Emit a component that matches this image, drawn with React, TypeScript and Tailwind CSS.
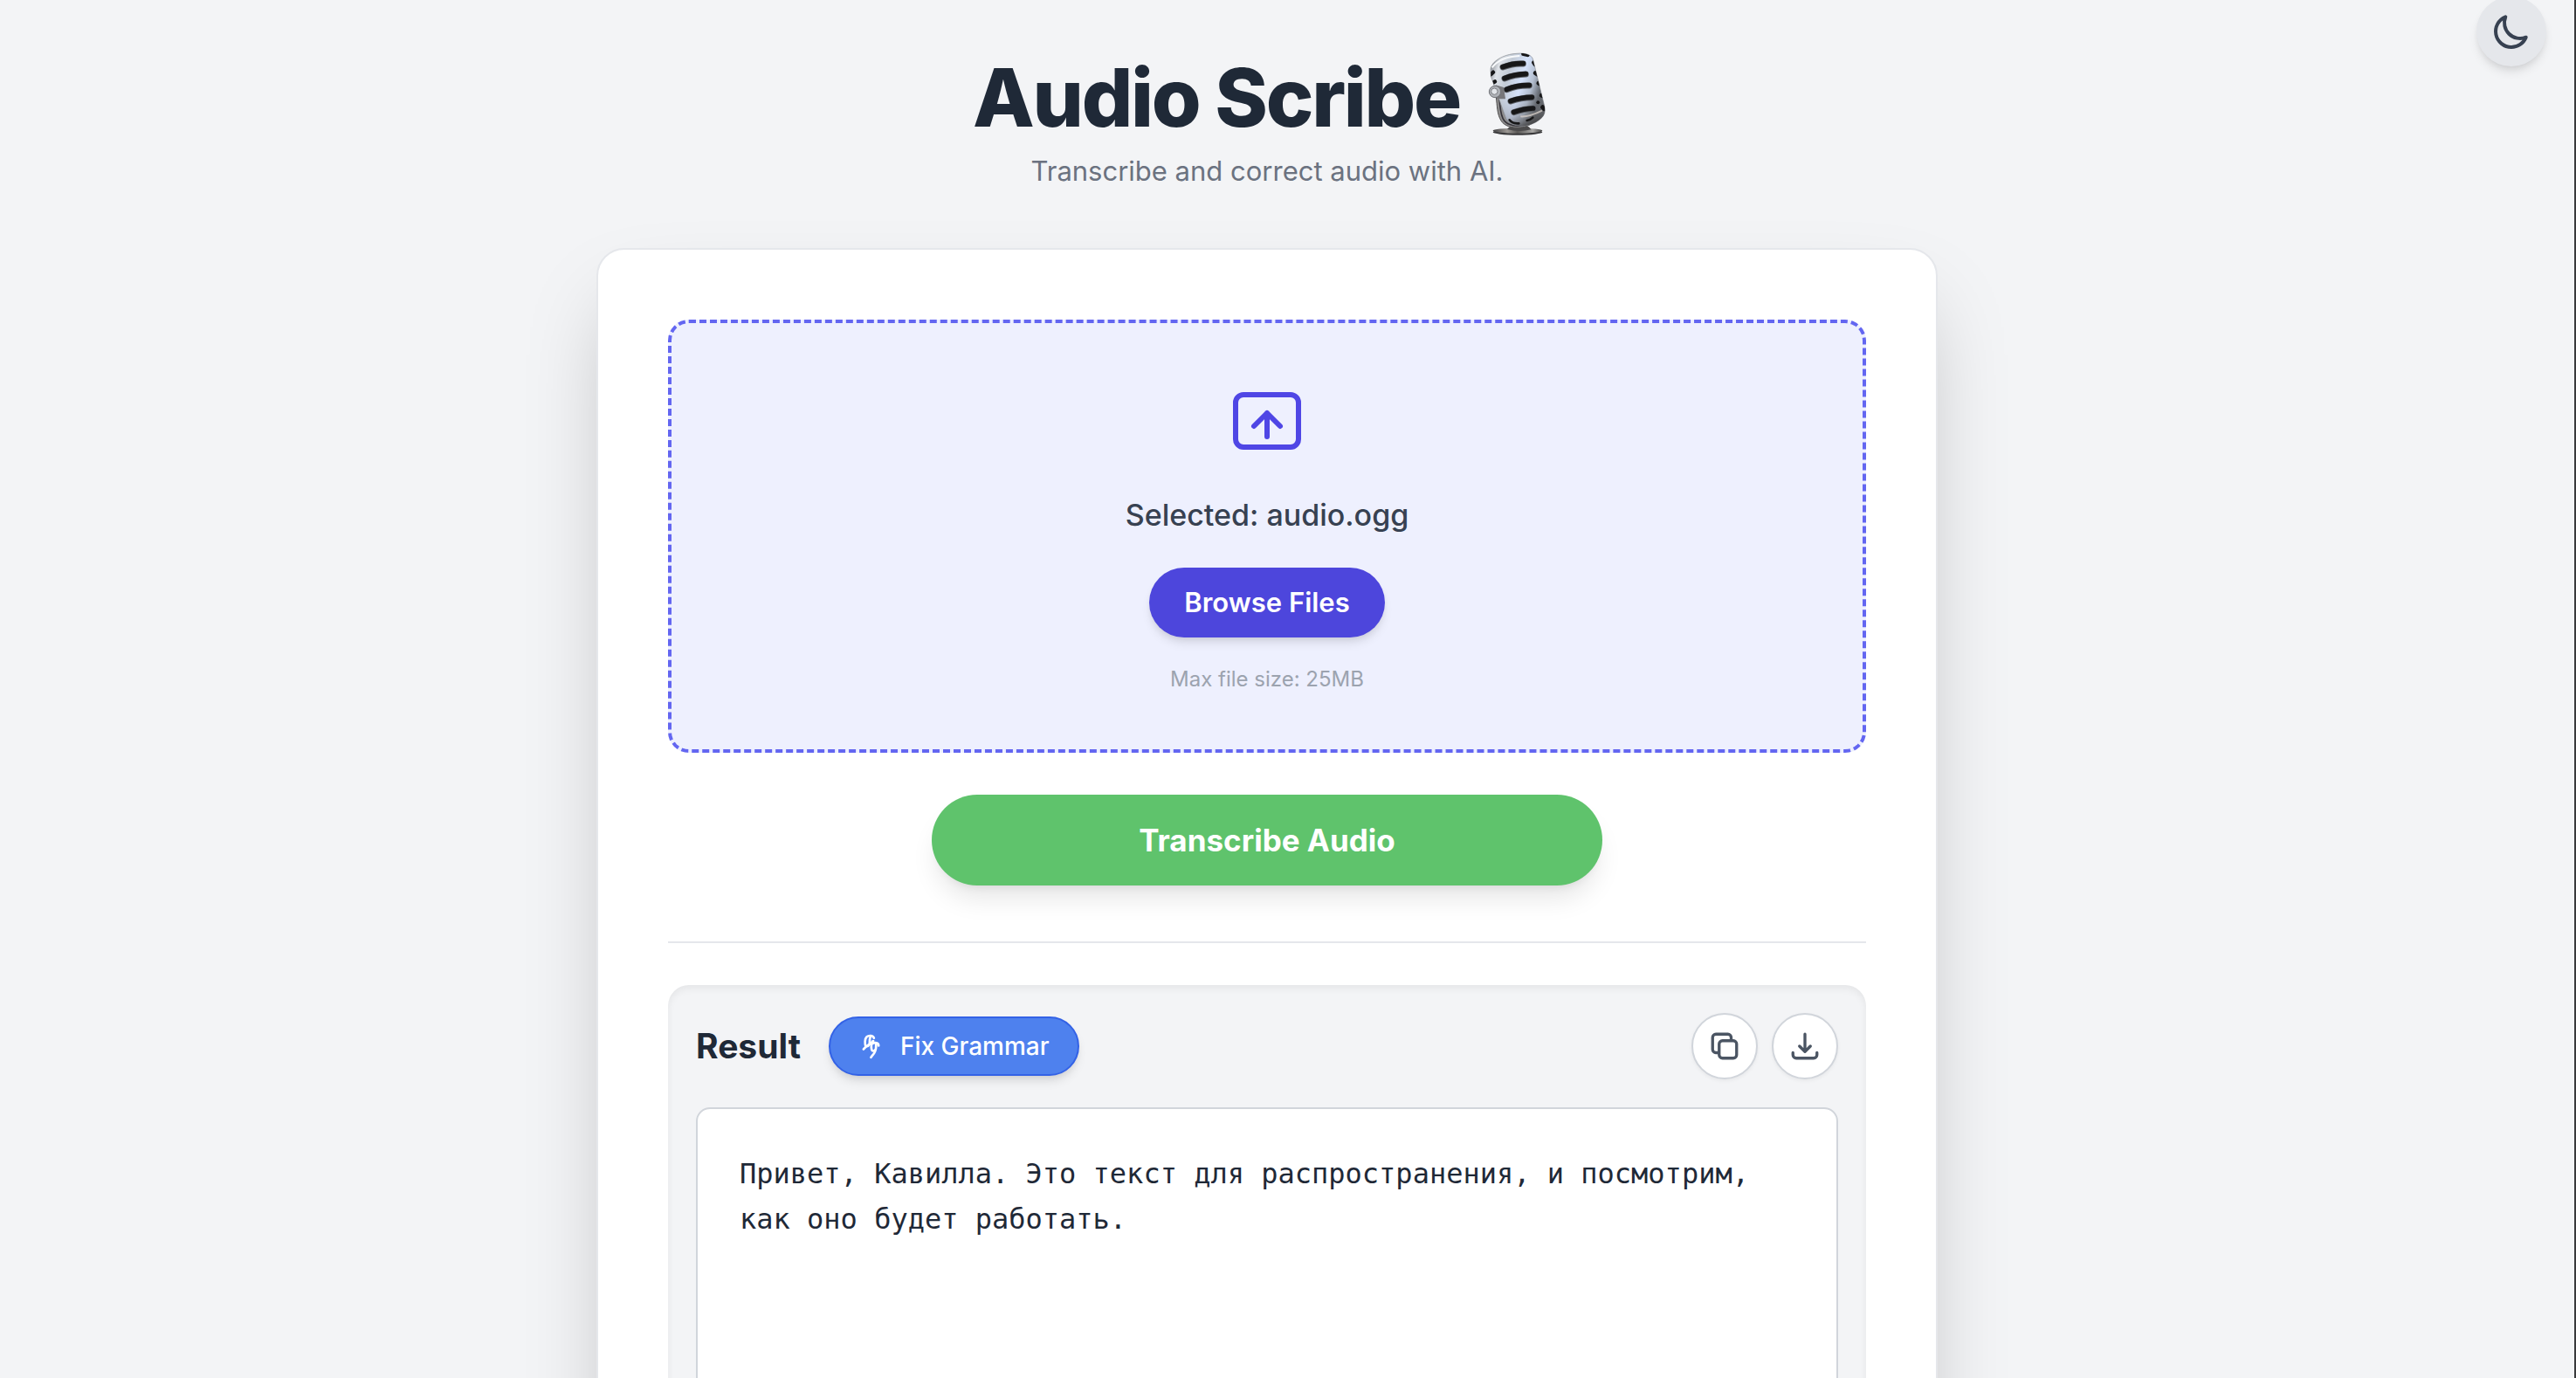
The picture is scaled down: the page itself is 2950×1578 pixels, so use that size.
import { useState } from "react";

function MicrophoneArt() {
  return (
    <svg viewBox="0 30 288 288" className="size-24 shrink-0" role="img" aria-label="Studio microphone">
      <defs>
        <linearGradient id="body" x1="45" y1="80" x2="225" y2="130" gradientUnits="userSpaceOnUse">
          <stop offset="0" stopColor="#8d9299" />
          <stop offset="0.14" stopColor="#dfe3e8" />
          <stop offset="0.35" stopColor="#c3cbd6" />
          <stop offset="0.62" stopColor="#d5e2fb" />
          <stop offset="0.82" stopColor="#b4bfd0" />
          <stop offset="1" stopColor="#5f646b" />
        </linearGradient>
        <linearGradient id="shade" x1="130" y1="180" x2="165" y2="290" gradientUnits="userSpaceOnUse">
          <stop offset="0" stopColor="#777" stopOpacity="0" />
          <stop offset="0.55" stopColor="#6c6c6e" stopOpacity="0.35" />
          <stop offset="1" stopColor="#3c3b3c" stopOpacity="0.9" />
        </linearGradient>
        <linearGradient id="base" x1="50" y1="0" x2="225" y2="0" gradientUnits="userSpaceOnUse">
          <stop offset="0" stopColor="#3c3c3e" />
          <stop offset="0.3" stopColor="#9c9894" />
          <stop offset="0.5" stopColor="#5a5856" />
          <stop offset="0.8" stopColor="#a9a8a6" />
          <stop offset="1" stopColor="#3c3c3c" />
        </linearGradient>
        <clipPath id="shell">
          <path d="M45 88C47 62 88 36 135 34C165 31 184 38 190 52L229 210C237 242 226 254 200 270C165 290 115 286 98 258L46 112Z" />
        </clipPath>
      </defs>
      <ellipse cx="138" cy="304" rx="85" ry="10" fill="#39393b" />
      <ellipse cx="138" cy="299" rx="85" ry="9" fill="url(#base)" />
      <path d="M102 294C112 280 128 278 148 281C172 279 178 286 184 295Q142 306 102 294Z" fill="#4b4a4b" />
      <path d="M64 185C68 210 66 242 82 266C100 294 160 296 190 272L180 262C155 282 115 278 103 254C91 230 92 200 90 182Z" fill="#8e8d8d" stroke="#4e4d4e" strokeWidth="3" />
      <path d="M75 190C79 218 77 245 92 265C107 283 137 285 160 280" fill="none" stroke="#35333a" strokeWidth="5" />
      <path d="M45 88C47 62 88 36 135 34C165 31 184 38 190 52L229 210C237 242 226 254 200 270C165 290 115 286 98 258L46 112Z" fill="url(#body)" stroke="#85898f" strokeWidth="2" />
      <g clipPath="url(#shell)">
        <path d="M0 130H250V300H0Z" fill="url(#shade)" />
        <path d="M50 82C70 55 105 44 145 42" fill="none" stroke="#f8fafc" strokeWidth="6" />
        <g stroke="#5d6167" strokeWidth="21" strokeLinecap="round" fill="none">
          <path d="M87 81Q122 67 157 69" />
          <path d="M93 120Q128 106 166 105" />
          <path d="M100 158Q137 143 178 144" />
          <path d="M114 198Q150 185 187 185" />
          <path d="M125 236Q160 224 191 223" />
        </g>
        <g stroke="#171718" strokeWidth="17" strokeLinecap="round" fill="none">
          <path d="M87 80Q122 66 157 68" />
          <path d="M93 119Q128 105 166 104" />
          <path d="M100 157Q137 142 178 143" />
          <path d="M114 197Q150 184 187 184" />
          <path d="M125 235Q160 223 191 222" />
          <path d="M54 98l-8 8M60 130l-12 8" strokeWidth="13" />
          <path d="M158 35l14 3M194 65l4 6M199 101l6 4M210 136l6 3M220 178l8 2M224 218l6 6" strokeWidth="15" />
          <path d="M110 262q10 14 32 12M170 264q12-2 20-10" strokeWidth="8" />
        </g>
        <circle cx="208" cy="202" r="6" fill="#171718" />
        <path d="M148 250Q178 252 222 230" fill="none" stroke="#d9d2cb" strokeWidth="6" opacity="0.75" />
      </g>
      <path d="M62 142L90 150L96 190L66 190Z" fill="#77777a" />
      <circle cx="60" cy="165" r="20" fill="#aeb1b6" stroke="#717378" strokeWidth="3" />
      <circle cx="58" cy="164" r="11" fill="#e2e5e9" stroke="#7d7f84" strokeWidth="3" />
    </svg>
  );
}

type IconProps = { className: string; strokeWidth: number; paths: string[] };

function Icon({ className, strokeWidth, paths }: IconProps) {
  return (
    <svg
      viewBox="0 0 24 24"
      fill="none"
      stroke="currentColor"
      strokeWidth={strokeWidth}
      strokeLinecap="round"
      strokeLinejoin="round"
      className={className}
      aria-hidden="true"
    >
      {paths.map((d) => (
        <path key={d} d={d} />
      ))}
    </svg>
  );
}

const moon = ["M20.354 15.354A9 9 0 018.646 3.646 9.003 9.003 0 0012 21a9.003 9.003 0 008.354-5.646z"];
const upload = [
  "M5.25 4.5h13.5A2.25 2.25 0 0121 6.75v10.5a2.25 2.25 0 01-2.25 2.25H5.25A2.25 2.25 0 013 17.25V6.75A2.25 2.25 0 015.25 4.5z",
  "M12 16.5V9.75m0 0l3.75 3.75M12 9.75l-3.75 3.75",
];
const copy = [
  "M16.5 8.25V6a2.25 2.25 0 00-2.25-2.25H6A2.25 2.25 0 003.75 6v8.25A2.25 2.25 0 006 16.5h2.25m8.25-8.25H18a2.25 2.25 0 012.25 2.25V18A2.25 2.25 0 0118 20.25h-7.5A2.25 2.25 0 018.25 18v-7.5a2.25 2.25 0 012.25-2.25h6z",
];
const download = [
  "M3.75 16.5V18A2.25 2.25 0 006 20.25h12A2.25 2.25 0 0020.25 18v-1.5",
  "M12 3.75v12m0 0l-3.75-3.75M12 15.75l3.75-3.75",
];
const grammar = [
  "M4.4 14.6L6.4 12.6C5.4 10 5.4 5.6 7.2 4C8.8 2.6 12.4 2.4 13.4 5",
  "M10.4 3.6C9.4 6 9.6 9 9.6 10.4C8.8 12 7.4 12.2 6.4 12.4",
  "M7.8 11.4C9.8 10.6 11.4 9.2 12.6 7.6",
  "M12.8 7.6C11.2 9.6 10.8 12.6 11.4 15C12 16.6 13.6 16.2 14.6 15",
  "M12.2 9.6C14 8.8 17.4 8.8 17.4 11.6",
  "M15.2 9.8C15.4 12.4 15.2 15 13.8 17.6C13.2 19 11.6 20 10.8 21.6",
];

export default function App() {
  const [text, setText] = useState(
    "Привет, Кавилла. Это текст для распространения, и посмотрим, как оно будет работать.",
  );

  return (
    <div className="relative h-screen overflow-hidden border-r-2 border-[#3a3a3c] bg-gray-100 pr-[46px] font-['Inter',sans-serif] text-[#1f2937]">
      <button
        type="button"
        aria-label="Toggle dark mode"
        className="absolute -top-1 right-8 rounded-full bg-[#e5e7eb] p-4 text-[#374151] shadow-[0_8px_12px_-2px_rgba(0,0,0,0.1),0_4px_8px_-4px_rgba(0,0,0,0.1)]"
      >
        <Icon className="size-12" strokeWidth={2} paths={moon} />
      </button>

      <div className="mx-auto max-w-[1536px] pt-[60px]">
        <header className="mb-16 text-center">
          <h1 className="flex items-start justify-center gap-5 text-[92px] leading-26 font-extrabold tracking-tight">
            Audio Scribe
            <MicrophoneArt />
          </h1>
          <p className="mt-2 text-[31px] leading-12 text-[#6b7280]">Transcribe and correct audio with AI.</p>
        </header>

        <main className="rounded-4xl border-2 border-[#e5e7eb] bg-white p-20 shadow-[0_50px_100px_-24px_rgba(0,0,0,0.25)]">
          <section className="flex flex-col items-center rounded-3xl border-4 border-dashed border-[#6366f1] bg-[#eef0fe] p-16">
            <Icon className="mb-8 size-24 text-[#4f46e5]" strokeWidth={1.5} paths={upload} />
            <p className="mb-8 text-[34px] leading-14 font-medium text-[#374151]">Selected: audio.ogg</p>
            <button
              type="button"
              className="mb-8 rounded-full bg-[#4d46dc] px-10 py-4 text-[31px] leading-12 font-semibold text-white shadow-[0_8px_12px_-2px_rgba(0,0,0,0.1),0_4px_8px_-4px_rgba(0,0,0,0.1)]"
            >
              Browse Files
            </button>
            <p className="text-[24px] leading-8 text-[#9ca3af]">Max file size: 25MB</p>
          </section>

          <button
            type="button"
            className="mx-auto mt-12 block w-full max-w-3xl rounded-full bg-[#5fc36c] py-6 text-[35px] leading-14 font-bold text-white shadow-[0_20px_30px_-6px_rgba(0,0,0,0.1),0_8px_12px_-8px_rgba(0,0,0,0.1)]"
          >
            Transcribe Audio
          </button>

          <hr className="mt-16 mb-12 border-t-2 border-[#e5e7eb]" />

          <section className="rounded-3xl bg-gray-100 p-8 shadow-[inset_0_4px_8px_0_rgba(0,0,0,0.06)]">
            <div className="mb-8 flex items-center justify-between">
              <div className="flex items-center gap-8">
                <h2 className="text-[39px] leading-14 font-bold">Result</h2>
                <button
                  type="button"
                  className="flex items-center gap-4 rounded-full border-2 border-[#3362e6] bg-[#4e81ee] px-8 py-3 text-[28px] leading-10 font-medium text-white shadow-[0_8px_12px_-2px_rgba(0,0,0,0.1),0_4px_8px_-4px_rgba(0,0,0,0.1)]"
                >
                  <Icon className="size-8" strokeWidth={2} paths={grammar} />
                  Fix Grammar
                </button>
              </div>
              <div className="flex gap-4 text-[#4b5563]">
                <button
                  type="button"
                  aria-label="Copy result"
                  className="rounded-full border-2 border-[#d1d5db] bg-white p-4 shadow-[0_2px_4px_0_rgba(0,0,0,0.05)]"
                >
                  <Icon className="size-10" strokeWidth={2} paths={copy} />
                </button>
                <button
                  type="button"
                  aria-label="Download result"
                  className="rounded-full border-2 border-[#d1d5db] bg-white p-4 shadow-[0_2px_4px_0_rgba(0,0,0,0.05)]"
                >
                  <Icon className="size-10" strokeWidth={2} paths={download} />
                </button>
              </div>
            </div>
            <textarea
              aria-label="Transcription result"
              value={text}
              onChange={(e) => setText(e.target.value)}
              spellCheck={false}
              rows={8}
              className="block w-full resize-none overflow-hidden rounded-2xl border-2 border-[#d1d5db] bg-white p-12 font-['DejaVu_Sans_Mono',monospace] text-[32px] leading-[52px] outline-none"
            />
          </section>
        </main>
      </div>
    </div>
  );
}
